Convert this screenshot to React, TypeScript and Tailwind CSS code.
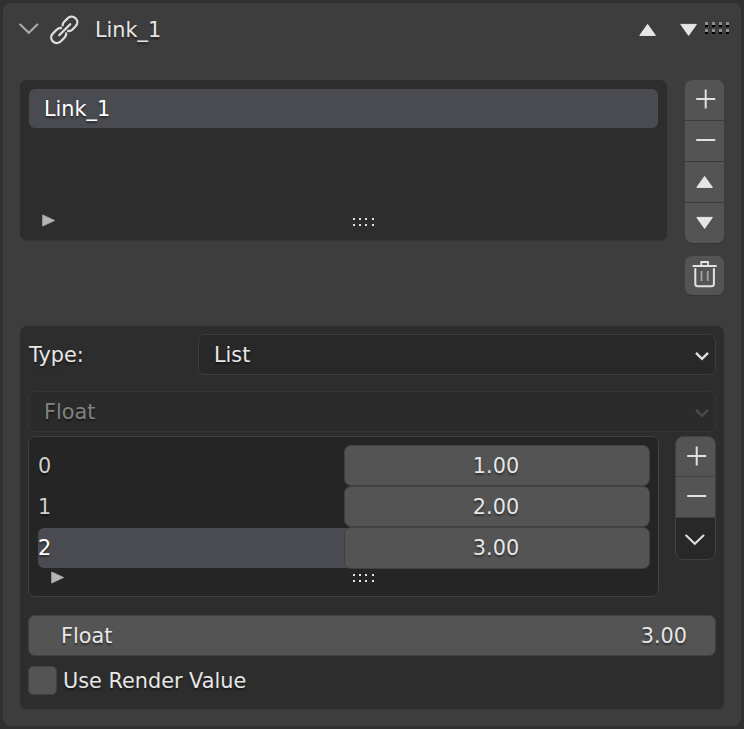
import React from 'react';

const TEXT_SHADOW = '[text-shadow:0_2px_2px_rgba(0,0,0,0.45)]';

function Triangle({ dir, className = '' }: { dir: 'up' | 'down'; className?: string }) {
  return (
    <svg width="18" height="14" viewBox="0 0 18 14" className={className}>
      <path
        d={dir === 'up' ? 'M8.6 1.4 L16.4 12.4 H0.8 Z' : 'M8.6 12.4 L16.4 1.4 H0.8 Z'}
        fill="#e6e6e6"
        stroke="#e6e6e6"
        strokeWidth="1"
        strokeLinejoin="round"
      />
    </svg>
  );
}

function Plus() {
  return (
    <svg width="20" height="20" viewBox="0 0 20 20" fill="#e0e0e0">
      <rect x="0.2" y="9" width="19" height="2" />
      <rect x="8.7" y="0.5" width="2" height="19" />
    </svg>
  );
}

function Minus() {
  return (
    <svg width="20" height="20" viewBox="0 0 20 20" fill="#e0e0e0">
      <rect x="0.2" y="9" width="19" height="2" />
    </svg>
  );
}

function WideChevron({ color }: { color: string }) {
  return (
    <svg width="20" height="12" viewBox="0 0 20 12" fill="none" stroke={color} strokeWidth="2.1" strokeLinecap="round">
      <path d="M1.2 1.5 L9.8 9.8 L18.4 1.5" />
    </svg>
  );
}

function SelectChevron({ color }: { color: string }) {
  return (
    <svg width="14" height="10" viewBox="0 0 14 10" fill="none" stroke={color} strokeWidth="2.4">
      <path d="M1 1.8 L7 7.9 L13 1.8" />
    </svg>
  );
}

function LinkIcon() {
  return (
    <svg width="32" height="32" viewBox="0 0 32 32" fill="none" stroke="#dcdcdc" strokeWidth="2.3" strokeLinecap="round">
      <path d="M11.2 21.2 L22.2 10.2" />
      <path d="M14.6 11.4 C14.5 10 15.2 8.8 16.2 7.8 L19.6 4.4 C21.8 2.1 25.3 2.1 27.6 4.3 C29.9 6.6 29.8 10 27.6 12.3 L24.2 15.7 C23.1 16.8 21.6 17.2 20.1 16.9" />
      <path d="M13 14 C11.4 13.9 9.8 14.6 8.6 15.8 L5 19.4 C2.7 21.7 2.6 25.1 4.8 27.4 C7.1 29.7 10.6 29.6 12.9 27.3 L16.4 23.8 C17.6 22.6 18.3 21.2 18.2 19.5" />
    </svg>
  );
}

function TrashIcon() {
  return (
    <svg width="26" height="28" viewBox="0 0 26 28" fill="none" stroke="#e3e3e3">
      <path d="M0.6 6 H24.7" strokeWidth="2" />
      <path d="M9.3 5 V2 H16 V5" strokeWidth="1.8" />
      <path d="M3.3 8.3 V23.8 Q3.3 26.3 5.8 26.3 H19.4 Q21.9 26.3 21.9 23.8 V8.3" strokeWidth="2" />
      <path d="M9.5 11 V21 M15.7 11 V21" strokeWidth="1.8" stroke="#a3a3a3" />
    </svg>
  );
}

function PlayIcon() {
  return (
    <svg width="14" height="13" viewBox="0 0 14 13">
      <path d="M0.7 1 L12.6 6.5 L0.7 12 Z" fill="#b6b6b6" stroke="#a2a2a2" strokeWidth="1" strokeLinejoin="round" />
    </svg>
  );
}

function ListGrip() {
  return (
    <svg width="22" height="9" viewBox="0 0 22 9" fill="#e2e2e2">
      {[0, 6, 12, 19].map((x) => (
        <React.Fragment key={x}>
          <rect x={x} y="0" width="2" height="2" />
          <rect x={x} y="6" width="2" height="2" />
        </React.Fragment>
      ))}
    </svg>
  );
}

function HeaderGrip() {
  return (
    <svg width="25" height="12" viewBox="0 0 25 12">
      {[0, 7, 14, 21].map((x) => (
        <React.Fragment key={x}>
          <rect x={x} y="0" width="3" height="3" fill="#8e8e8e" />
          <rect x={x} y="3" width="3" height="2" fill="#000" />
          <rect x={x} y="7" width="3" height="3" fill="#8e8e8e" />
          <rect x={x} y="10" width="3" height="2" fill="#000" />
        </React.Fragment>
      ))}
    </svg>
  );
}

const items = [
  { index: 0, value: '1.00' },
  { index: 1, value: '2.00' },
  { index: 2, value: '3.00' },
];

export default function App() {
  return (
    <div
      className={`h-[729px] w-[744px] overflow-hidden bg-[#303030] p-[3px] font-['DejaVu_Sans',sans-serif] text-[20.8px] leading-[22px] text-[#e6e6e6] ${TEXT_SHADOW}`}
    >
      <main className="h-[723px] w-[738px] rounded-[8px] bg-[#3d3d3d] px-[17px]">
        <header className="-ml-px -mr-[6px] flex h-[53px] items-center">
          <span className="-mt-[2px]">
            <WideChevron color="#aaaaaa" />
          </span>
          <span className="ml-[9px]">
            <LinkIcon />
          </span>
          <h1 className="ml-[15px] grow">Link_1</h1>
          <Triangle dir="up" />
          <Triangle dir="down" className="ml-[23px]" />
          <span className="-mt-[3px] ml-[7px]">
            <HeaderGrip />
          </span>
        </header>

        <section className="mt-6 flex justify-between">
          <div className="h-[160px] w-[647px] rounded-[7px] bg-[#2d2d2d] p-[9px] shadow-[0_1px_0_#373737]">
            <div className="flex h-[39px] items-center rounded-[6px] bg-[#4a4b50] pl-[15px] text-white">Link_1</div>
            <div className="mt-[86px] flex items-start pl-[13px]">
              <PlayIcon />
              <span className="ml-[297px] mt-1">
                <ListGrip />
              </span>
            </div>
          </div>
          <div className="w-[39px]">
            <div className="grid h-[163px] grid-rows-[40px_40px_40px_40px] gap-px overflow-hidden rounded-[7px] bg-[#3b3b3b] shadow-[0_1px_0_#343434] *:flex *:items-center *:justify-center *:bg-[#545454]">
              <button className="pb-0.5 pl-0.5"><Plus /></button>
              <button className="pb-0.5 pl-0.5"><Minus /></button>
              <button><Triangle dir="up" /></button>
              <button><Triangle dir="down" /></button>
            </div>
            <button className="mt-[13px] flex h-[39px] w-[39px] items-center justify-center rounded-[7px] bg-[#545454] pb-[3px] shadow-[0_1px_0_#353535]">
              <TrashIcon />
            </button>
          </div>
        </section>

        <section className="mt-[31px] h-[383px] w-[704px] rounded-[7px] bg-[#2d2d2d] px-2 pt-2 shadow-[0_1px_0_#373737]">
          <div className="flex h-[41px] items-center justify-between pl-px">
            <span>Type:</span>
            <button className="flex h-[41px] w-[518px] items-center justify-between rounded-[7px] border border-[#3d3d3d] bg-[#282828] pl-[15px] pr-[6px]">
              <span className={`leading-[22px] ${TEXT_SHADOW}`}>List</span>
              <span className="mt-[3px]"><SelectChevron color="#dedede" /></span>
            </button>
          </div>

          <div className="mt-4 flex h-[41px] items-center justify-between rounded-[7px] border border-[#353535] bg-[#2b2b2b] pl-[15px] pr-[6px] text-[#818181]">
            <span>Float</span>
            <span className="mt-[3px]"><SelectChevron color="#4c4c4c" /></span>
          </div>

          <div className="mt-1 flex items-start justify-between">
            <div className="h-[161px] w-[631px] rounded-[7px] border border-[#414141] bg-[#252525] px-2 pt-2">
              {items.map((item) => (
                <div
                  key={item.index}
                  className={
                    item.index === 2
                      ? 'flex h-[42px] items-center justify-between rounded-[7px] bg-[#4a4b50] bg-clip-content py-px pl-px text-white'
                      : 'flex h-[41px] items-center justify-between pl-px text-[#d0d0d0]'
                  }
                >
                  <span>{item.index}</span>
                  <span
                    className={`flex w-[306px] shrink-0 items-center justify-center rounded-[7px] border border-[#414141] bg-[#545454] pr-[2px] text-[#e6e6e6] ${item.index === 2 ? 'h-[42px]' : 'h-[41px]'}`}
                  >
                    {item.value}
                  </span>
                </div>
              ))}
              <div className="mt-[2px] flex items-start pl-[14px]">
                <PlayIcon />
                <span className="ml-[288px] mt-[3px]">
                  <ListGrip />
                </span>
              </div>
            </div>
            <div className="grid h-[124px] w-[41px] grid-rows-[39px_40px_41px] gap-px overflow-hidden rounded-[8px] border border-[#414141] bg-[#414141] *:flex *:items-center *:justify-center *:bg-[#545454]">
              <button className="pb-0.5 pl-0.5"><Plus /></button>
              <button className="pb-0.5 pl-0.5"><Minus /></button>
              <button className="bg-[#282828]! pr-px pt-0.5"><WideChevron color="#dedede" /></button>
            </div>
          </div>

          <div className="mt-[18px] flex h-[41px] items-center justify-between rounded-[7px] border border-[#414141] bg-[#545454] pl-8 pr-7">
            <span>Float</span>
            <span>3.00</span>
          </div>

          <label className="mt-[10px] flex h-[29px] items-center gap-[6px]">
            <span className="size-[29px] rounded-[5px] border border-[#414141] bg-[#545454]" />
            Use Render Value
          </label>
        </section>
      </main>
    </div>
  );
}
